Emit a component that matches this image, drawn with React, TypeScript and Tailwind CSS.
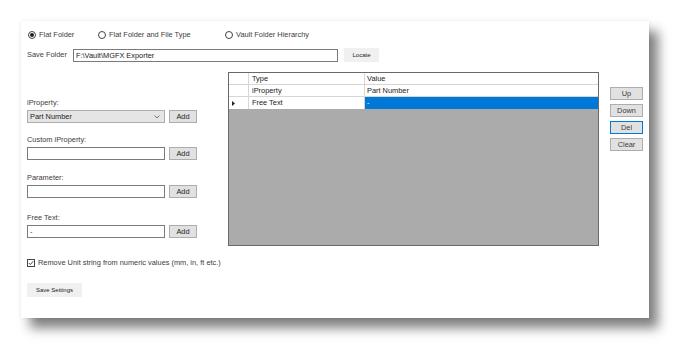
import type { ReactNode } from 'react';

const font = { fontFamily: '"Liberation Sans", Arial, sans-serif' };

function Radio({ label, checked }: { label: string; checked?: boolean }) {
  return (
    <label className="flex items-center gap-[3px]">
      <span className="flex h-[8px] w-[8px] items-center justify-center rounded-full border border-[#444] bg-white">
        {checked && <span className="h-[4px] w-[4px] rounded-full bg-[#222]" />}
      </span>
      <span>{label}</span>
    </label>
  );
}

function AddButton() {
  return (
    <button
      type="button"
      className="ml-[4px] h-[13px] w-[28px] border border-[#adadad] bg-[#e1e1e1] leading-[11px] text-[#222]"
    >
      Add
    </button>
  );
}

function Field({ label, children, top }: { label: string; children: ReactNode; top: string }) {
  return (
    <div className={top}>
      <div className="h-[10px] leading-[10px]">{label}</div>
      <div className="mt-[2px] flex items-center">{children}</div>
    </div>
  );
}

function SideButton({ label, active }: { label: string; active?: boolean }) {
  return (
    <button
      type="button"
      className={`h-[13px] w-[33px] border bg-[#e1e1e1] leading-[11px] ${
        active ? 'border-[#0078d7]' : 'border-[#adadad]'
      }`}
    >
      {label}
    </button>
  );
}

export default function App() {
  return (
    <div className="h-[360px] w-[691px] bg-white pl-[21px] pt-[21px]" style={font}>
      <div className="h-[297px] w-[628px] bg-white text-[7.4px] text-[#3c3c3c] shadow-[0_0_3px_rgba(0,0,0,0.08),9px_10px_11px_rgba(0,0,0,0.5)]">
        {/* radio row */}
        <div className="flex h-[27px] items-center pl-[7px] pt-[1px]">
          <div className="w-[70px]">
            <Radio label="Flat Folder" checked />
          </div>
          <div className="w-[127px]">
            <Radio label="Flat Folder and File Type" />
          </div>
          <Radio label="Vault Folder Hierarchy" />
        </div>

        {/* save folder row */}
        <div className="flex h-[14px] items-center pl-[6px]">
          <span className="w-[46px]">Save Folder</span>
          <div className="h-[13px] w-[265px] border border-[#7a7a7a] bg-white pl-[2px] leading-[11px] text-[#222]">
            F:\Vault\MGFX Exporter
          </div>
          <button type="button" className="ml-[6px] h-[14px] w-[35px] bg-[#f0f0f0] text-[6px] text-[#222]">
            Locate
          </button>
        </div>

        {/* main area */}
        <div className="mt-[10px] flex h-[174px]">
          <div className="w-[207px] pl-[6px]">
            <Field label="iProperty:" top="mt-[26px]">
              <div className="flex h-[13px] w-[138px] items-center justify-between border border-[#adadad] bg-[#e5e5e5] px-[2px] text-[#222]">
                <span>Part Number</span>
                <svg width="6" height="4" viewBox="0 0 6 4" className="mr-[2px]">
                  <path d="M0.5 0.5 L3 3 L5.5 0.5" fill="none" stroke="#555" strokeWidth="0.8" />
                </svg>
              </div>
              <AddButton />
            </Field>
            <Field label="Custom iProperty:" top="mt-[12px]">
              <div className="h-[13px] w-[138px] border border-[#7a7a7a] bg-white" />
              <AddButton />
            </Field>
            <Field label="Parameter:" top="mt-[13px]">
              <div className="h-[13px] w-[138px] border border-[#7a7a7a] bg-white" />
              <AddButton />
            </Field>
            <Field label="Free Text:" top="mt-[15px]">
              <div className="h-[13px] w-[138px] border border-[#7a7a7a] bg-white pl-[2px] leading-[11px]">-</div>
              <AddButton />
            </Field>
          </div>

          {/* grid */}
          <div className="h-[174px] w-[371px] border border-[#696969] bg-[#ababab]">
            <div className="grid grid-cols-[20px_116px_1fr] bg-white leading-[11px] text-[#222]">
              <div className="h-[12px] border-b border-r border-[#d6d6d6]" />
              <div className="h-[12px] border-b border-r border-[#d6d6d6] pl-[3px]">Type</div>
              <div className="h-[12px] border-b border-[#d6d6d6] pl-[2px]">Value</div>

              <div className="h-[12px] border-b border-r border-[#d6d6d6]" />
              <div className="h-[12px] border-b border-r border-[#d6d6d6] pl-[3px]">iProperty</div>
              <div className="h-[12px] border-b border-[#d6d6d6] pl-[2px]">Part Number</div>

              <div className="flex h-[12px] items-center border-r border-[#d6d6d6] pl-[3px]">
                <svg width="3" height="5" viewBox="0 0 3 5">
                  <path d="M0 0 L3 2.5 L0 5 Z" fill="#222" />
                </svg>
              </div>
              <div className="h-[12px] border-r border-[#d6d6d6] pl-[3px]">Free Text</div>
              <div className="h-[12px] bg-[#0078d7] pl-[2px] text-white">-</div>
            </div>
          </div>

          {/* side buttons */}
          <div className="ml-[11px] mt-[15px] flex flex-col gap-[4px]">
            <SideButton label="Up" />
            <SideButton label="Down" />
            <SideButton label="Del" active />
            <SideButton label="Clear" />
          </div>
        </div>

        {/* checkbox */}
        <div className="mt-[11px] flex items-center gap-[3px] pl-[6px]">
          <span className="flex h-[8px] w-[8px] items-center justify-center border border-[#444] bg-white">
            <svg width="6" height="6" viewBox="0 0 6 6">
              <path d="M0.8 3 L2.4 4.6 L5.2 1.2" fill="none" stroke="#222" strokeWidth="0.8" />
            </svg>
          </span>
          <span>Remove Unit string from numeric values (mm, in, ft etc.)</span>
        </div>

        {/* save */}
        <div className="mt-[15px] pl-[6px]">
          <button type="button" className="h-[14px] w-[55px] bg-[#f0f0f0] text-[6px] text-[#222]">
            Save Settings
          </button>
        </div>
      </div>
    </div>
  );
}
